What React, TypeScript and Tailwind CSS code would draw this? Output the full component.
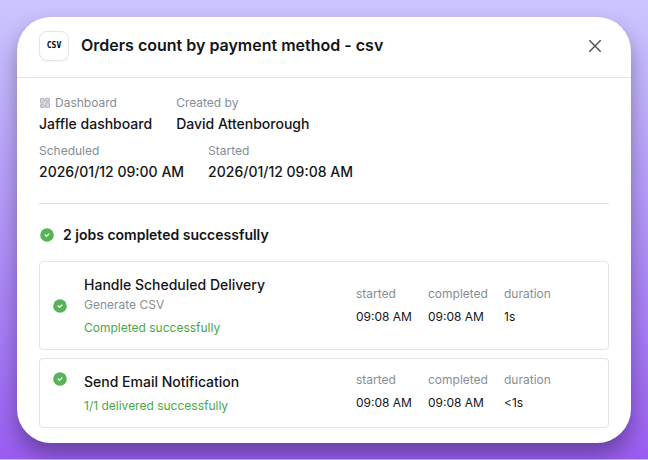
interface Field {
  label: string;
  value: string;
  icon?: boolean;
}

interface Job {
  title: string;
  detail?: string;
  result: string;
  times: Field[];
}

const fieldRows: Field[][] = [
  [
    { label: "Dashboard", value: "Jaffle dashboard", icon: true },
    { label: "Created by", value: "David Attenborough" },
  ],
  [
    { label: "Scheduled", value: "2026/01/12 09:00 AM" },
    { label: "Started", value: "2026/01/12 09:08 AM" },
  ],
];

const jobs: Job[] = [
  {
    title: "Handle Scheduled Delivery",
    detail: "Generate CSV",
    result: "Completed successfully",
    times: [
      { label: "started", value: "09:08 AM" },
      { label: "completed", value: "09:08 AM" },
      { label: "duration", value: "1s" },
    ],
  },
  {
    title: "Send Email Notification",
    result: "1/1 delivered successfully",
    times: [
      { label: "started", value: "09:08 AM" },
      { label: "completed", value: "09:08 AM" },
      { label: "duration", value: "<1s" },
    ],
  },
];

function CheckBadge() {
  return (
    <svg className="size-3.5 shrink-0" viewBox="0 0 14 14" aria-hidden="true">
      <circle cx="7" cy="7" r="6.8" fill="#56b356" />
      <path
        d="M5.1 7l1.4 1.3L8.9 6"
        fill="none"
        stroke="white"
        strokeWidth="1.2"
        strokeLinecap="round"
        strokeLinejoin="round"
      />
    </svg>
  );
}

function DashboardIcon() {
  return (
    <svg className="size-3 shrink-0" viewBox="0 0 12 12" fill="#d3d6da" stroke="#b1b6bc" strokeWidth="1" aria-hidden="true">
      <rect x="1.5" y="1.5" width="3.7" height="4.7" rx="0.4" />
      <rect x="1.5" y="7.6" width="3.7" height="2.9" rx="0.4" />
      <rect x="6.6" y="1.5" width="3.9" height="2.9" rx="0.4" />
      <rect x="6.6" y="5.8" width="3.9" height="4.7" rx="0.4" />
    </svg>
  );
}

function JobCard({ job }: { job: Job }) {
  return (
    <li
      className={`flex rounded border border-[#e3e4e6] pl-[13px] ${
        job.detail ? "items-center pt-3 pb-[11px]" : "items-start pt-2.5 pb-[11px]"
      }`}
    >
      <div className={job.detail ? "" : "pt-[3px]"}>
        <CheckBadge />
      </div>
      <div className={`flex flex-1 pl-[17px] ${job.detail ? "items-center" : "items-start"}`}>
        <div className={`flex-1 ${job.detail ? "" : "pt-0.5"}`}>
          <h3 className="text-sm leading-[22px] font-medium">{job.title}</h3>
          {job.detail && <p className="text-xs leading-[18px] text-[#868e96]">{job.detail}</p>}
          <p className={`text-xs leading-5 text-[#4ba64b] ${job.detail ? "mt-1" : "mt-[3px]"}`}>{job.result}</p>
        </div>
        <dl className="grid w-[252px] grid-cols-[56px_60px_1fr] gap-4 text-xs">
          {job.times.map((time) => (
            <div key={time.label} className="whitespace-nowrap">
              <dt className="leading-[22px] text-[#868e96]">{time.label}</dt>
              <dd className="leading-6">{time.value}</dd>
            </div>
          ))}
        </dl>
      </div>
    </li>
  );
}

export default function App() {
  return (
    <div className="min-h-screen border-b border-[#c9b3f5] bg-linear-to-b from-[#cbc5fd] to-[#995cf0] p-[17px] pb-4 font-['Inter',sans-serif] text-[#141517]">
      <main className="rounded-[34px] bg-white pb-[15px] shadow-[0_11px_20px_rgba(0,0,0,0.33)]">
        <header className="flex h-[61px] items-center border-b border-[#e3e4e6] px-[22px] pb-[3px]">
          <div className="flex size-[30px] items-center justify-center rounded-lg border border-[#e3e5e8] font-['DejaVu_Sans_Mono',monospace] text-[8px] font-bold text-black shadow-xs">
            CSV
          </div>
          <h1 className="ml-3 flex-1 pb-0.5 text-base font-semibold">Orders count by payment method - csv</h1>
          <button type="button" aria-label="Close" className="flex size-7 items-center justify-center text-[#495057]">
            <svg className="size-3.5" viewBox="0 0 14 14" stroke="currentColor" strokeWidth="1.4" aria-hidden="true">
              <path d="M1.3 1.3l11.4 11.4M12.7 1.3L1.3 12.7" />
            </svg>
          </button>
        </header>

        <div className="px-[22px] pt-[15px]">
          <div className="space-y-1.5 border-b border-[#dcdee0] pb-5">
            {fieldRows.map((row) => (
              <dl key={row[0].label} className="flex gap-6">
                {row.map((field) => (
                  <div key={field.label}>
                    <dt className="flex items-center gap-1 text-xs leading-5 text-[#868e96]">
                      {field.icon && <DashboardIcon />}
                      {field.label}
                    </dt>
                    <dd className="text-sm leading-[22px] font-medium">{field.value}</dd>
                  </div>
                ))}
              </dl>
            ))}
          </div>

          <h2 className="mt-5 flex items-center gap-[9px] pl-px text-sm leading-[22px] font-semibold">
            <CheckBadge />
            2 jobs completed successfully
          </h2>

          <ul className="mt-[15px] space-y-2">
            {jobs.map((job) => (
              <JobCard key={job.title} job={job} />
            ))}
          </ul>
        </div>
      </main>
    </div>
  );
}
